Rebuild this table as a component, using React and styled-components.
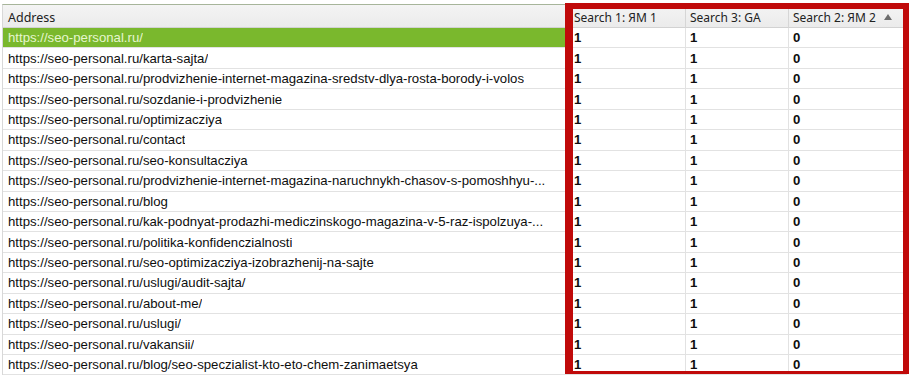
import styled, { createGlobalStyle } from "styled-components";

const GlobalStyle = createGlobalStyle`
  html, body {
    margin: 0;
    padding: 0;
    background: #fff;
  }
`;

const Page = styled.div`
  position: relative;
  width: 916px;
  height: 379px;
  padding: 4px 0 0 2px;
  box-sizing: border-box;
  overflow: hidden;
`;

const Grid = styled.div`
  display: grid;
  grid-template-columns: 567px 116px 103px 118px;
  grid-auto-rows: 20.45px;
  grid-template-rows: 23px;
  border-top: 1px solid #a7b59a;
  border-left: 1px solid #d8d8d8;
  width: max-content;
`;

const HeadCell = styled.div`
  display: flex;
  align-items: center;
  gap: 6px;
  padding: 2px ${(p) => (p.$wide ? 5 : 4)}px 0;
  background: linear-gradient(#f4f4f4, #ebebeb);
  border-bottom: 1px solid #d2d2d2;
  border-right: 1px solid #d6d6d6;
  font-family: "Noto Sans", "Open Sans", sans-serif;
  font-size: ${(p) => (p.$wide ? "12.5px" : "12px")};
  color: #222;
  white-space: nowrap;
  box-sizing: border-box;
`;

const Cell = styled.div`
  display: flex;
  align-items: center;
  padding: 0 ${(p) => (p.$wide ? 5 : 4)}px;
  background: ${(p) => (p.$selected ? "#7ab82d" : "#fff")};
  color: ${(p) => (p.$selected ? "#e6f6cf" : "#0e0e0e")};
  border-bottom: 1px solid #e2e2e2;
  border-right: 1px solid ${(p) => (p.$selected ? "#7ab82d" : "#e2e2e2")};
  font-family: "Liberation Sans", Arial, sans-serif;
  font-size: 13.2px;
  font-weight: ${(p) => (p.$num ? 700 : 400)};
  white-space: nowrap;
  overflow: hidden;
  box-sizing: border-box;
`;

const CellText = styled.span`
  overflow: hidden;
  text-overflow: ellipsis;
`;

const SortArrow = styled.svg`
  width: 8px;
  height: 6px;
  margin-left: 2px;
  fill: #6d6d6d;
`;

const Frame = styled.div`
  position: absolute;
  left: 565px;
  top: 3px;
  width: 344px;
  height: 371px;
  border: solid #c00a0a;
  border-width: 6px 6px 3px 8px;
  box-sizing: border-box;
  pointer-events: none;
`;

const base = "https://seo-personal.ru/";

const rows = [
  "",
  "karta-sajta/",
  "prodvizhenie-internet-magazina-sredstv-dlya-rosta-borody-i-volos",
  "sozdanie-i-prodvizhenie",
  "optimizacziya",
  "contact",
  "seo-konsultacziya",
  "prodvizhenie-internet-magazina-naruchnykh-chasov-s-pomoshhyu-...",
  "blog",
  "kak-podnyat-prodazhi-mediczinskogo-magazina-v-5-raz-ispolzuya-...",
  "politika-konfidenczialnosti",
  "seo-optimizacziya-izobrazhenij-na-sajte",
  "uslugi/audit-sajta/",
  "about-me/",
  "uslugi/",
  "vakansii/",
  "blog/seo-speczialist-kto-eto-chem-zanimaetsya",
];

function App() {
  return (
    <>
      <GlobalStyle />
      <Page>
        <Grid>
          <HeadCell $wide>Address</HeadCell>
          <HeadCell>Search 1: ЯМ 1</HeadCell>
          <HeadCell>Search 3: GA</HeadCell>
          <HeadCell>
            Search 2: ЯМ 2
            <SortArrow viewBox="0 0 8 6">
              <polygon points="4,0 8,6 0,6" />
            </SortArrow>
          </HeadCell>
          {rows.map((path, i) => (
            <Row key={i} url={base + path} selected={i === 0} />
          ))}
        </Grid>
        <Frame />
      </Page>
    </>
  );
}

function Row({ url, selected }) {
  return (
    <>
      <Cell $wide $selected={selected}>
        <CellText>{url}</CellText>
      </Cell>
      <Cell $num>1</Cell>
      <Cell $num>1</Cell>
      <Cell $num>0</Cell>
    </>
  );
}

export default App;
